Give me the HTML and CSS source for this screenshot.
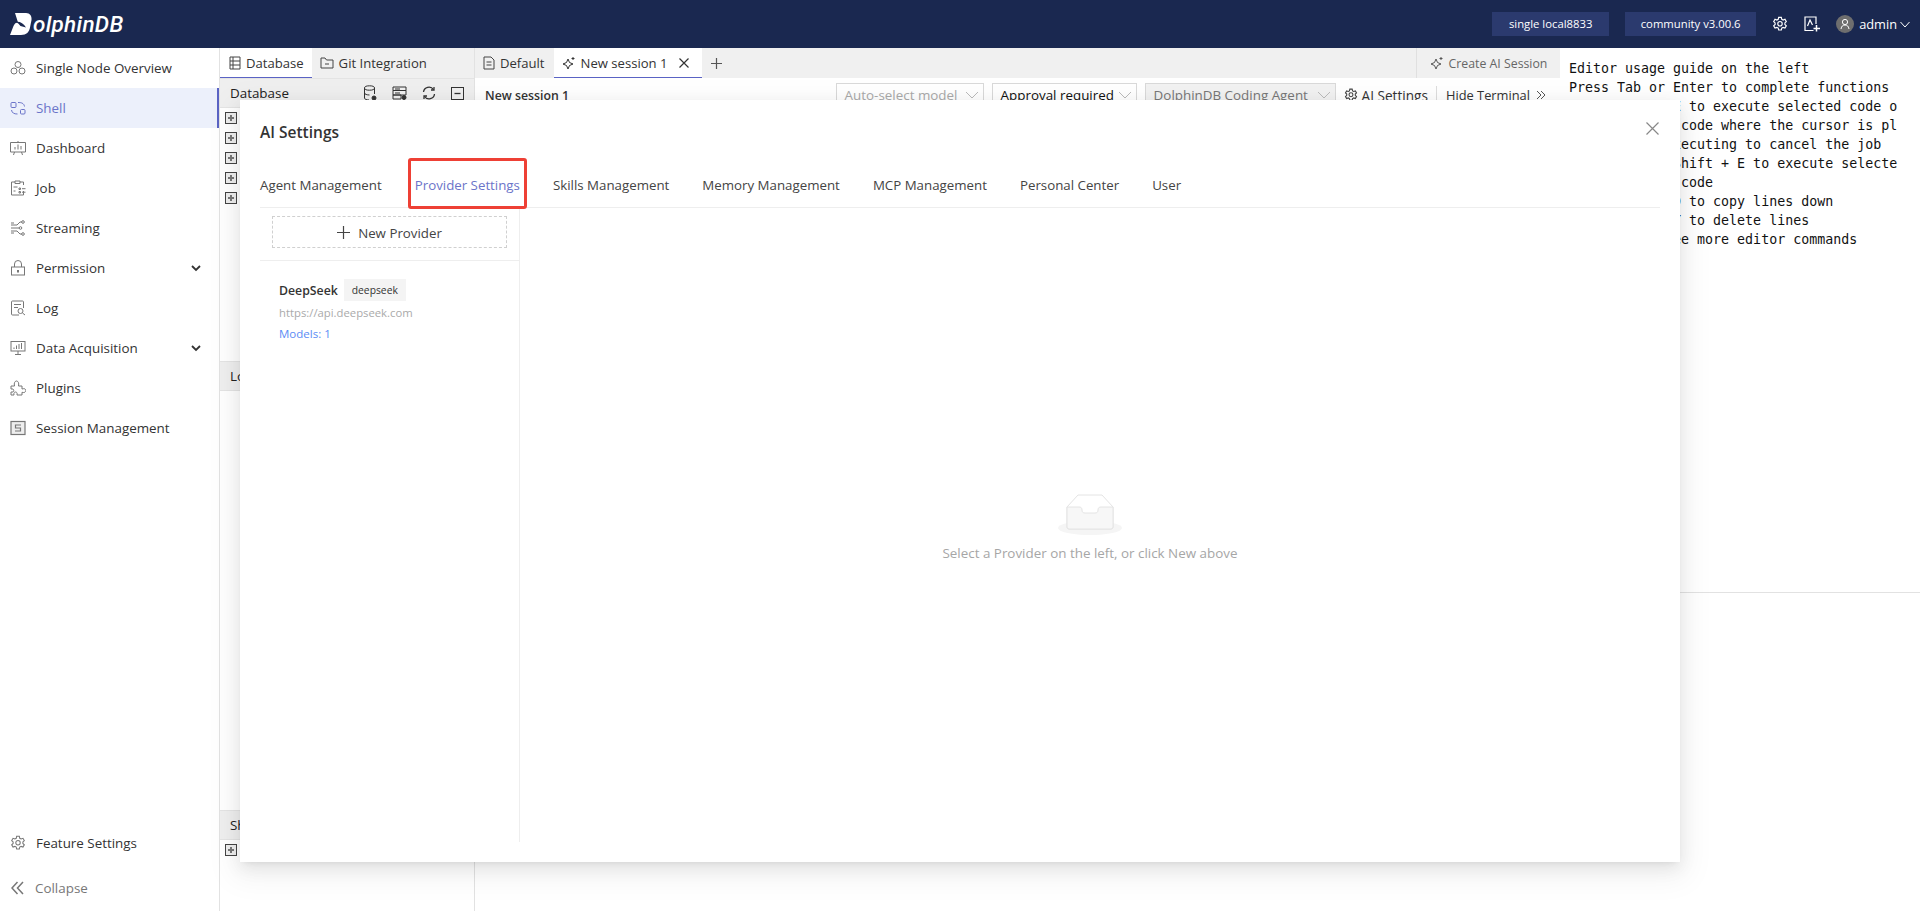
FILE: index.html
```html
<!DOCTYPE html>
<html lang="en">
<head>
  <meta charset="UTF-8" />
  <title>DolphinDB</title>
  <link rel="stylesheet" href="styles.css">
</head>
<body>

  <header class="topbar">
    <div class="logo">
      <svg class="logo-d" width="22" height="24" viewBox="0 0 22 24"><path fill="#fff" d="M5 1h11c4 0 6 3 5.500 7L20 15.500c-.7 4.500-3.500 7.500-9 7.500H0l3.500-9C4.500 11.500 6 10.500 8 10.500z"/><path fill="#1a2850" d="M5.500 10c3.500-1 8 1 10.500 5.500L10.500 14C9.500 12.500 8 11 5.500 10z"/></svg>
      <span class="logo-text">olphinDB</span>
    </div>
    <div class="topbar-right">
      <span class="badge">single local8833</span>
      <span class="badge badge-version">community v3.00.6</span>
      <svg class="top-icon" width="16" height="16" viewBox="0 0 18 18" fill="none" stroke="#fff" stroke-width="1.300"><path d="M7.500 1.500h3l.5 2.200 1.500.8 2.100-.8 1.500 2.600-1.600 1.500v1.700l1.600 1.500-1.500 2.600-2.100-.8-1.500.8-.5 2.200h-3L7 13.600l-1.500-.8-2.100.8-1.500-2.600 1.600-1.500V7.800L1.900 6.300l1.500-2.600 2.100.8L7 3.700z"/><circle cx="9" cy="8.700" r="2.500"/></svg>
      <svg class="top-icon" width="16" height="16" viewBox="0 0 16 16" fill="none" stroke="#fff" stroke-width="1.200"><path d="M9.500 14.500H1V1h11v7"/><path d="M3.500 10L6 4l2.500 5"/><path d="M12.500 9v6.500M9.500 12.500H16" stroke-width="1.500"/></svg>
      <span class="avatar"><svg width="12" height="12" viewBox="0 0 12 12" fill="none" stroke="#fff"><circle cx="6" cy="4" r="2.600"/><path d="M2 11c.5-3 2-4 4-4s3.500 1 4 4"/></svg></span>
      <span class="user">admin</span>
      <svg class="user-caret" width="10" height="7" viewBox="0 0 10 7" fill="none" stroke="#fff"><path d="M.5 1L5 6l4.500-5"/></svg>
    </div>
  </header>

  <div class="app">
    <aside class="sidebar">
      <ul class="menu">
        <li class="menu-item">
          <svg class="menu-icon" viewBox="0 0 16 16" fill="none" stroke="#777"><circle cx="8" cy="4.500" r="3"/><circle cx="4" cy="11" r="3"/><circle cx="12" cy="11" r="3"/></svg>
          <span>Single Node Overview</span>
        </li>
        <li class="menu-item active">
          <svg class="menu-icon" viewBox="0 0 16 16" fill="none" stroke="#6b74c9"><rect x="1" y="2.500" width="5" height="5" rx="1"/><rect x="10.500" y="9.500" width="4.500" height="4.500" rx="1"/><path d="M8 2.500c3 0 6 .5 6.500 4M7.500 14C4 14 2 13 1.500 10"/></svg>
          <span>Shell</span>
        </li>
        <li class="menu-item">
          <svg class="menu-icon" viewBox="0 0 16 16" fill="none" stroke="#777"><path d="M.5 2.500h15v9.500H.5zM8 1v1.500M3.500 15l1-3M12.500 15l-1-3M5 9.500V7M8 9.500V4.500M11 9.500V6"/></svg>
          <span>Dashboard</span>
        </li>
        <li class="menu-item">
          <svg class="menu-icon" viewBox="0 0 16 16" fill="none" stroke="#777"><path d="M5 2H1.500v13h12V11M10 2h3.500v3M5 1h5v2.500H5zM3.500 7h4M3.500 11h2M9 8h1.500v1.500H9zM9 11.500h1.500V13H9zM12 8.700h3.500M12 12.200h3.500"/></svg>
          <span>Job</span>
        </li>
        <li class="menu-item">
          <svg class="menu-icon" viewBox="0 0 16 16" fill="none" stroke="#777"><path d="M1 5h6l3-3h2M1 8h8M1 11h6l3 3h2M1 3h3M1 13h3"/><circle cx="13" cy="2" r="1.300"/><circle cx="10.500" cy="8" r="1.300"/><circle cx="13" cy="14" r="1.300"/></svg>
          <span>Streaming</span>
        </li>
        <li class="menu-item">
          <svg class="menu-icon" viewBox="0 0 16 16" fill="none" stroke="#777"><rect x="1.500" y="7" width="13" height="8"/><path d="M4.500 7V4a3.500 3.500 0 0 1 7 0v3"/><path d="M8 10v2.500" stroke-width="2"/></svg>
          <span>Permission</span>
          <svg class="menu-caret" width="10" height="7" viewBox="0 0 10 7" fill="none" stroke="#333" stroke-width="1.800"><path d="M1 1l4 4 4-4"/></svg>
        </li>
        <li class="menu-item">
          <svg class="menu-icon" viewBox="0 0 16 16" fill="none" stroke="#777"><path d="M9 15H2.500a1 1 0 0 1-1-1V2a1 1 0 0 1 1-1h10a1 1 0 0 1 1 1v6M4 4.500h7M4 7.500h4"/><circle cx="10.500" cy="11" r="2.500"/><path d="M12.500 13l2.500 2"/></svg>
          <span>Log</span>
        </li>
        <li class="menu-item">
          <svg class="menu-icon" viewBox="0 0 16 16" fill="none" stroke="#777"><rect x="1" y="1.500" width="14" height="9.500"/><path d="M5 14.500h6M8 11v3.500M4 9V7.500M6.500 9V5.500M9 9V4M11.500 9V3"/></svg>
          <span>Data Acquisition</span>
          <svg class="menu-caret" width="10" height="7" viewBox="0 0 10 7" fill="none" stroke="#333" stroke-width="1.800"><path d="M1 1l4 4 4-4"/></svg>
        </li>
        <li class="menu-item">
          <svg class="menu-icon" viewBox="0 0 16 16" fill="none" stroke="#777"><path d="M1 6h3.500c-.8-3 .5-5 2-5s2.800 2 2 5H12v3c2.500-.8 3.800 0 3.800 1.500S14.500 13 12 12.300V15H7c.5-2-.3-3-1.500-3S3.500 13 4 15H1v-3h2c1-1 1-2 0-3H1z"/></svg>
          <span>Plugins</span>
        </li>
        <li class="menu-item">
          <svg class="menu-icon" viewBox="0 0 16 16" fill="none" stroke="#777" stroke-width="1.200"><rect x="1" y="1.500" width="14" height="13" fill="#eee"/><path d="M11 5H5.500v3h5v3H5"/></svg>
          <span>Session Management</span>
        </li>
      </ul>
      <div class="sidebar-bottom">
        <div class="menu-item">
          <svg class="menu-icon" viewBox="0 0 18 18" fill="none" stroke="#777" stroke-width="1.200"><path d="M7.500 1.500h3l.5 2.200 1.500.8 2.100-.8 1.500 2.600-1.600 1.500v1.700l1.600 1.500-1.500 2.600-2.100-.8-1.500.8-.5 2.200h-3L7 13.600l-1.500-.8-2.100.8-1.500-2.600 1.600-1.500V7.800L1.900 6.300l1.500-2.600 2.100.8L7 3.700z"/><circle cx="9" cy="8.700" r="2.500"/></svg>
          <span>Feature Settings</span>
        </div>
        <div class="collapse-row">
          <svg width="13" height="14" viewBox="0 0 13 14" fill="none" stroke="#777" stroke-width="1.500"><path d="M6.500 1L1 7l5.500 6M12 1L6.500 7l5.500 6"/></svg>
          <span>Collapse</span>
        </div>
      </div>
    </aside>

    <section class="db-panel">
      <div class="tab-strip">
        <div class="tab active tab-db">
          <svg width="12" height="14" viewBox="0 0 12 14" fill="none" stroke="#444"><path d="M1 1h10v12H1zM1 5h10M1 9h10M4 1v12"/></svg>
          Database
        </div>
        <div class="tab">
          <svg width="14" height="12" viewBox="0 0 14 12" fill="none" stroke="#444"><path d="M1 11V1h4l1.500 2H13v8z"/><path d="M5 7h4"/></svg>
          Git Integration
        </div>
      </div>
      <div class="section-head">
        <span>Database</span>
        <div class="section-tools">
          <svg width="14" height="16" viewBox="0 0 14 16" fill="none" stroke="#333"><ellipse cx="6.500" cy="3" rx="5" ry="2.200"/><path d="M1.500 3v10c0 1.200 2 2 4.500 2M11.500 3v6M1.500 8c0 1.200 2.500 2 5 2"/><circle cx="11" cy="13" r="2" fill="#333"/></svg>
          <svg width="15" height="14" viewBox="0 0 15 14" fill="none" stroke="#333"><path d="M1 1h13v3.500H1zM1 4.500h13V9H1zM1 9h8v4H1zM3 3h5M3 7h5"/><circle cx="12" cy="11.500" r="2" fill="#333"/></svg>
          <svg width="14" height="14" viewBox="0 0 14 14" fill="none" stroke="#333" stroke-width="1.300"><path d="M1.500 6A5.500 5.500 0 0 1 11.500 3.500M12.500 8A5.500 5.500 0 0 1 2.500 10.500"/><path d="M12 1v3H9M2 13v-3h3"/></svg>
          <svg width="13" height="13" viewBox="0 0 13 13" fill="none" stroke="#333"><rect x=".5" y=".5" width="12" height="12"/><path d="M3.500 6.500h6" stroke-width="1.300"/></svg>
        </div>
      </div>
      <div class="tree">
        <span class="plus"></span>
        <span class="plus"></span>
        <span class="plus"></span>
        <span class="plus"></span>
        <span class="plus"></span>
      </div>
      <div class="section-head"><span>Local</span></div>
      <div class="section-fill"></div>
      <div class="section-head"><span>Shared</span></div>
      <div class="tree tree-shared"><span class="plus"></span></div>
    </section>

    <section class="main-panel">
      <div class="tab-strip">
        <div class="tab">
          <svg width="12" height="14" viewBox="0 0 12 14" fill="none" stroke="#444"><path d="M1 1h7l3 3v9H1zM3.500 6h5M3.500 9h5"/></svg>
          Default
        </div>
        <div class="tab active tab-session">
          <svg width="14" height="14" viewBox="0 0 14 14" fill="none" stroke="#333"><path d="M6 3l1.500 3.500L11 8l-3.500 1.500L6 13 4.500 9.500 1 8l3.500-1.500z"/><path d="M11 1v3M9.500 2.500h3"/></svg>
          New session 1
          <svg class="tab-close" width="10" height="10" viewBox="0 0 10 10" stroke="#333" stroke-width="1.200"><path d="M.5.500l9 9M9.500.500l-9 9"/></svg>
        </div>
        <svg class="tab-add" width="11" height="11" viewBox="0 0 11 11" stroke="#555" stroke-width="1.200"><path d="M5.500 0v11M0 5.500h11"/></svg>
        <div class="create-session">
          <svg width="14" height="14" viewBox="0 0 14 14" fill="none" stroke="#555"><path d="M6 3l1.500 3.500L11 8l-3.500 1.500L6 13 4.500 9.500 1 8l3.500-1.500z"/><path d="M11 1v3M9.500 2.500h3"/></svg>
          Create AI Session
        </div>
      </div>
      <div class="session-bar">
        <strong class="session-name">New session 1</strong>
        <div class="session-tools">
          <div class="select select-model">Auto-select model <svg width="14" height="8" viewBox="0 0 14 8" fill="none" stroke="#bbb"><path d="M1 1l6 6 6-6"/></svg></div>
          <div class="select select-approval">Approval required <svg width="14" height="8" viewBox="0 0 14 8" fill="none" stroke="#bbb"><path d="M1 1l6 6 6-6"/></svg></div>
          <div class="select select-agent">DolphinDB Coding Agent <svg width="14" height="8" viewBox="0 0 14 8" fill="none" stroke="#bbb"><path d="M1 1l6 6 6-6"/></svg></div>
          <div class="tool-link tool-settings">
            <svg width="14" height="14" viewBox="0 0 18 18" fill="none" stroke="#444" stroke-width="1.400"><path d="M7.500 1.500h3l.5 2.200 1.500.8 2.100-.8 1.500 2.600-1.600 1.500v1.700l1.600 1.500-1.500 2.600-2.100-.8-1.500.8-.5 2.200h-3L7 13.600l-1.500-.8-2.100.8-1.500-2.600 1.600-1.500V7.800L1.900 6.300l1.500-2.600 2.100.8L7 3.700z"/><circle cx="9" cy="8.700" r="2.500"/></svg>
            AI Settings
          </div>
          <div class="tool-link tool-hide">
            Hide Terminal
            <svg width="10" height="10" viewBox="0 0 10 10" fill="none" stroke="#555"><path d="M1 1l4 4-4 4M5 1l4 4-4 4"/></svg>
          </div>
        </div>
      </div>
    </section>

    <section class="terminal">
      <div class="term-output">
        <pre class="term-text">Editor usage guide on the left
Press Tab or Enter to complete functions
Press Ctrl + E to execute selected code o
  the line of code where the cursor is pl
  Esc while executing to cancel the job
Press Ctrl + Shift + E to execute selecte
  the line of code
Press Ctrl + D to copy lines down
Press Ctrl + Y to delete lines
Press F1 to see more editor commands</pre>
      </div>
      <div class="term-input"></div>
    </section>
  </div>

  <div class="modal">
    <div class="modal-head">
      <h2 class="modal-title">AI Settings</h2>
      <svg class="modal-close" width="13" height="13" viewBox="0 0 13 13" stroke="#888" stroke-width="1.200"><path d="M.5.500l12 12M12.500.500l-12 12"/></svg>
    </div>
    <div class="modal-tabs">
      <div class="modal-tab">Agent Management</div>
      <div class="modal-tab current">Provider Settings<span class="highlight-box"></span></div>
      <div class="modal-tab">Skills Management</div>
      <div class="modal-tab">Memory Management</div>
      <div class="modal-tab">MCP Management</div>
      <div class="modal-tab">Personal Center</div>
      <div class="modal-tab">User</div>
    </div>
    <div class="modal-body">
      <div class="provider-list">
        <div class="provider-add-wrap">
          <button class="provider-add">
            <svg width="13" height="13" viewBox="0 0 13 13" stroke="#444" stroke-width="1.200"><path d="M6.500 0v13M0 6.500h13"/></svg>
            <span class="provider-add-label">New Provider</span>
          </button>
        </div>
        <div class="provider-card">
          <div class="provider-row">
            <strong class="provider-name">DeepSeek</strong>
            <span class="provider-tag">deepseek</span>
          </div>
          <div class="provider-url">https://api.deepseek.com</div>
          <div class="provider-models">Models: 1</div>
        </div>
      </div>
      <div class="provider-detail">
        <svg class="empty-icon" width="64" height="41" viewBox="0 0 64 41" fill="none">
          <ellipse cx="32" cy="34" rx="32" ry="7" fill="#f5f5f5"/>
          <path d="M9 13L20 1h24l11 12v20a2 2 0 0 1-2 2H11a2 2 0 0 1-2-2z" fill="#fff" stroke="#e4e4e4" stroke-width="1"/>
          <path d="M9 13h12c2 0 3 1 3 3s1 3 3 3h10c2 0 3-1 3-3s1-3 3-3h12v20a2 2 0 0 1-2 2H11a2 2 0 0 1-2-2z" fill="#f7f7f7" stroke="#e4e4e4" stroke-width="1"/>
        </svg>
        <p class="empty-text">Select a Provider on the left, or click New above</p>
      </div>
    </div>
  </div>

</body>
</html>
```

FILE: styles.css
```css
* {
  margin: 0;
  padding: 0;
  box-sizing: border-box;
}

html, body {
  height: 911px;
  overflow: hidden;
}

body {
  font-family: 'Open Sans', 'Noto Sans', sans-serif;
  font-size: 13.400px;
  color: #333;
  background: #fff;
  display: flex;
  flex-direction: column;
}

/* top bar */
.topbar {
  height: 48px;
  flex: none;
  background: #1a2850;
  color: #fff;
  display: flex;
  justify-content: space-between;
  align-items: center;
  padding-left: 10px;
  padding-right: 10px;
}

.logo {
  display: flex;
  align-items: center;
}

.logo-text {
  font-family: 'Roboto', sans-serif;
  font-style: italic;
  font-size: 22.500px;
  font-weight: 500;
  letter-spacing: 0.3px;
  margin-left: 1px;
  line-height: 24px;
}

.topbar-right {
  display: flex;
  align-items: center;
}

.badge {
  height: 24px;
  width: 117px;
  background: #2b3a6e;
  font-size: 11.300px;
  line-height: 24px;
  text-align: center;
  margin-right: 16px;
}

.badge-version {
  width: 131px;
}

.top-icon {
  margin-right: 16px;
}

.avatar {
  width: 18px;
  height: 18px;
  border-radius: 50%;
  background: #6e6e6e;
  display: flex;
  align-items: center;
  justify-content: center;
}

.user {
  margin-left: 5px;
  font-size: 12.800px;
}

.user-caret {
  margin-left: 3px;
}

/* page columns */
.app {
  flex: 1;
  display: flex;
  min-height: 0;
}

.sidebar {
  width: 220px;
  flex: none;
  border-right: 1px solid #e2e2e2;
  display: flex;
  flex-direction: column;
  justify-content: space-between;
}

.menu {
  list-style: none;
}

.menu-item {
  height: 40px;
  display: flex;
  align-items: center;
  padding-left: 10px;
  padding-right: 18px;
  color: #333;
}

.menu-item.active {
  background: #ecf0fb;
  color: #6b74c9;
  border-right: 2px solid #5a63c4;
  padding-right: 16px;
}

.menu-icon {
  width: 16px;
  height: 16px;
  margin-right: 10px;
  flex: none;
}

.menu-caret {
  margin-left: auto;
}

.sidebar-bottom {
  padding-bottom: 3px;
}

.sidebar-bottom .menu-item {
  margin-bottom: 5px;
}

.collapse-row {
  height: 40px;
  display: flex;
  align-items: center;
  padding-left: 11px;
  color: #777;
}

.collapse-row svg {
  margin-right: 11px;
}

.db-panel {
  width: 255px;
  flex: none;
  border-right: 1px solid #e2e2e2;
  display: flex;
  flex-direction: column;
}

.tab-strip {
  height: 30px;
  flex: none;
  background: #f0f0f0;
  display: flex;
  align-items: stretch;
  white-space: nowrap;
  font-size: 13.100px;
}

.tab {
  display: flex;
  align-items: center;
  gap: 5px;
  padding: 0 9px 0 8px;
  color: #333;
}

.tab.active {
  background: #fff;
  border-bottom: 1px solid #5a63c4;
}

.tab-db {
  padding: 0 8px 0 9px;
}

.section-head {
  height: 30px;
  flex: none;
  background: #efefef;
  border-top: 1px solid #e4e4e4;
  border-bottom: 1px solid #e4e4e4;
  display: flex;
  align-items: center;
  justify-content: space-between;
  padding: 0 10px;
  color: #222;
}

.section-tools {
  display: flex;
  align-items: center;
  gap: 15px;
}

.tree {
  padding: 4px 5px;
  display: flex;
  flex-direction: column;
  gap: 8px;
  height: 253px;
  flex: none;
}

.tree-shared {
  height: 71px;
}

.plus {
  width: 12px;
  height: 12px;
  border: 1px solid #444;
  background: #eee;
  position: relative;
}

.plus::before {
  content: '';
  position: absolute;
  left: 2px;
  top: 4px;
  width: 6px;
  height: 2px;
  background: #777;
}

.plus::after {
  content: '';
  position: absolute;
  left: 4px;
  top: 2px;
  width: 2px;
  height: 6px;
  background: #777;
}

.section-fill {
  flex: 1;
}

.main-panel {
  width: 1085px;
  flex: none;
  display: flex;
  flex-direction: column;
}

.tab-session {
  padding: 0 12px 0 8px;
  width: 148px;
}

.tab-close {
  margin-left: 7px;
}

.tab-add {
  align-self: center;
  margin-left: 9px;
}

.create-session {
  margin-left: auto;
  width: 144px;
  border-left: 1px solid #e0e0e0;
  display: flex;
  align-items: center;
  justify-content: center;
  gap: 5px;
  color: #666;
  font-size: 12.300px;
}

.session-bar {
  height: 34px;
  display: flex;
  justify-content: space-between;
  align-items: center;
  padding: 0 14px 0 10px;
}

.session-name {
  font-size: 12.300px;
  font-weight: 600;
}

.session-tools {
  display: flex;
  align-items: center;
  white-space: nowrap;
}

.select {
  height: 24px;
  border: 1px solid #d9d9d9;
  display: flex;
  align-items: center;
  justify-content: space-between;
  padding: 0 4px 0 8px;
  margin-right: 8px;
}

.select-model {
  width: 148px;
  color: #aaa;
}

.select-approval {
  width: 145px;
  color: #111;
}

.select-agent {
  width: 191px;
  background: #f2f2f2;
  color: #777;
}

.tool-link {
  display: flex;
  align-items: center;
  gap: 4px;
}

.tool-settings {
  font-size: 13.600px;
}

.tool-hide {
  border-left: 1px solid #ddd;
  margin-left: 8px;
  padding-left: 9px;
  gap: 6px;
  font-size: 12.850px;
}

.terminal {
  flex: 1;
  min-width: 0;
  display: flex;
  flex-direction: column;
  overflow: hidden;
}

.term-output {
  height: 545px;
  flex: none;
  padding: 11px 9px;
  border-bottom: 1px solid #e2e2e2;
  overflow: hidden;
}

.term-text {
  font-family: 'DejaVu Sans Mono', monospace;
  font-size: 13.300px;
  line-height: 19px;
  color: #111;
}

/* settings dialog over the page */
.modal {
  position: absolute;
  left: 240px;
  top: 100px;
  width: 1440px;
  height: 762px;
  background: #fff;
  box-shadow: 0 6px 16px rgba(0, 0, 0, 0.08), 0 3px 6px -4px rgba(0, 0, 0, 0.12), 0 9px 28px 8px rgba(0, 0, 0, 0.05);
  padding: 0 20px;
  display: flex;
  flex-direction: column;
}

.modal-head {
  height: 61px;
  flex: none;
  display: flex;
  justify-content: space-between;
  align-items: center;
  padding-top: 3px;
}

.modal-title {
  font-size: 15.500px;
  font-weight: 600;
  color: #333;
}

.modal-close {
  align-self: flex-start;
  margin-top: 19px;
  margin-right: 1px;
}

.modal-tabs {
  height: 47px;
  flex: none;
  display: flex;
  gap: 33px;
  align-items: center;
  padding-top: 2px;
  border-bottom: 1px solid #eee;
  color: #444;
  font-size: 13.300px;
}

.modal-tab {
  position: relative;
  white-space: nowrap;
  line-height: 18px;
}

.modal-tab.current {
  color: #6b74c9;
}

.highlight-box {
  position: absolute;
  left: -7px;
  right: -7px;
  top: -18px;
  bottom: -15px;
  border: 3px solid #ee4035;
  border-radius: 3px;
}

.modal-body {
  flex: 1;
  display: flex;
  min-height: 0;
  padding-bottom: 20px;
}

.provider-list {
  width: 260px;
  flex: none;
  border-right: 1px solid #eee;
}

.provider-add-wrap {
  padding: 8px 12px 12px 12px;
  border-bottom: 1px solid #eee;
}

.provider-add {
  width: 235px;
  height: 32px;
  background: #fff;
  border: 1px dashed #d0d0d0;
  display: flex;
  align-items: center;
  justify-content: center;
  gap: 8px;
  font-family: inherit;
  font-size: 13.300px;
  color: #444;
}

.provider-add-label {
  padding-top: 1px;
}

.provider-card {
  padding: 18px 19px;
}

.provider-row {
  display: flex;
  align-items: center;
  gap: 6px;
  height: 22px;
}

.provider-name {
  font-weight: 600;
  font-size: 12.300px;
  color: #333;
}

.provider-tag {
  height: 22px;
  width: 62px;
  text-align: center;
  background: #f4f4f4;
  font-size: 10.300px;
  line-height: 22px;
  color: #333;
}

.provider-url {
  margin-top: 3px;
  font-size: 11.300px;
  color: #aaa;
  line-height: 18px;
}

.provider-models {
  margin-top: 3px;
  font-size: 11.500px;
  color: #5b8cf5;
  line-height: 18px;
}

.provider-detail {
  flex: 1;
  display: flex;
  flex-direction: column;
  align-items: center;
  padding-top: 286px;
}

.empty-text {
  margin-top: 9px;
  font-size: 13.400px;
  color: #a6a6a6;
}
```
